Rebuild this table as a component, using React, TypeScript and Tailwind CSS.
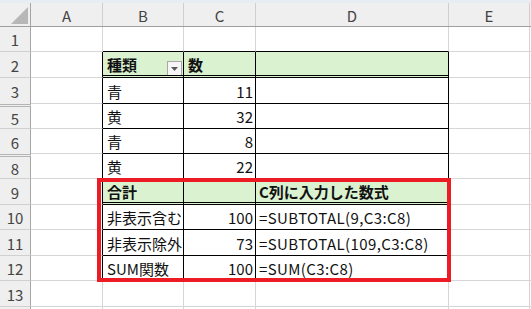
import type { ReactNode } from 'react';

type Row = {
  n: string;
  h: number;
  head?: boolean;
  filter?: boolean;
  afterHidden?: boolean;
  beforeHidden?: boolean;
  b?: string;
  c?: string;
  d?: string;
};

const columns = [
  { key: 'A', w: 72 },
  { key: 'B', w: 81 },
  { key: 'C', w: 72 },
  { key: 'D', w: 193 },
  { key: 'E', w: 81 },
];

const rows: Row[] = [
  { n: '1', h: 25 },
  { n: '2', h: 26, head: true, filter: true, b: '種類', c: '数' },
  { n: '3', h: 26, b: '青', c: '11', beforeHidden: true },
  { n: '5', h: 25, b: '黄', c: '32', afterHidden: true },
  { n: '6', h: 25, b: '青', c: '8', beforeHidden: true },
  { n: '8', h: 25, b: '黄', c: '22', afterHidden: true },
  { n: '9', h: 26, head: true, b: '合計', d: 'C列に入力した数式' },
  { n: '10', h: 25, b: '非表示含む', c: '100', d: '=SUBTOTAL(9,C3:C8)' },
  { n: '11', h: 26, b: '非表示除外', c: '73', d: '=SUBTOTAL(109,C3:C8)' },
  { n: '12', h: 25, b: 'SUM関数', c: '100', d: '=SUM(C3:C8)' },
  { n: '13', h: 26 },
];

// rows that belong to the bordered table (2..12)
const inTable = (r: Row) => !['1', '13'].includes(r.n);

function FilterButton() {
  return (
    <span className="mb-[-2px] ml-auto flex h-[16px] w-[15px] shrink-0 items-center justify-center self-end border border-[#a9a9a9] bg-[#f6f6f6]">
      <svg width="7" height="4" viewBox="0 0 7 4">
        <polygon points="0,0 7,0 3.5,4" fill="#5a5a5a" />
      </svg>
    </span>
  );
}

function Cell({
  w,
  className,
  children,
}: {
  w: number;
  className: string;
  children?: ReactNode;
}) {
  return (
    <div className={`flex shrink-0 items-center overflow-hidden whitespace-nowrap ${className}`} style={{ width: w }}>
      {children}
    </div>
  );
}

function SheetRow({ r }: { r: Row }) {
  const table = inTable(r);
  const bottomBlack = table || r.n === '1';
  const dataBottom = r.head
    ? 'border-b-[3px] border-double border-b-black'
    : bottomBlack
      ? 'border-b border-b-black'
      : 'border-b border-b-[#d6d6d6]';
  const dataRight = table ? 'border-r border-r-black' : 'border-r border-r-[#d6d6d6]';
  const fill = r.head ? 'bg-[#daf2d0] font-bold' : 'bg-white';
  const headerEdge = r.afterHidden
    ? 'border-t-[3px] border-double border-t-[#b5b5b5] border-b border-b-[#d0d0d0]'
    : r.beforeHidden
      ? ''
      : 'border-b border-b-[#d0d0d0]';

  return (
    <div className="flex" style={{ height: r.h }}>
      <div
        className={`flex w-[31px] shrink-0 items-center justify-center border-r border-r-[#a6a6a6] bg-[#efefef] pt-px text-[#444] ${headerEdge}`}
      >
        {r.n}
      </div>
      <Cell
        w={72}
        className={`border-b border-b-[#d6d6d6] ${table ? 'border-r border-r-black' : 'border-r border-r-[#d6d6d6]'}`}
      />
      <Cell w={81} className={`pl-[4px] pr-px pt-px ${dataBottom} ${dataRight} ${fill}`}>
        {r.b}
        {r.filter && <FilterButton />}
      </Cell>
      <Cell w={72} className={`pl-[4px] pt-px ${r.head ? '' : 'justify-end pr-[2px]'} ${dataBottom} ${dataRight} ${fill}`}>
        {r.c}
      </Cell>
      <Cell
        w={193}
        className={`pl-[3px] pt-px ${r.head ? '' : 'tracking-[0.4px]'} ${dataBottom} ${dataRight} ${fill}`}
      >
        {r.d}
      </Cell>
      <Cell w={81} className="border-b border-r border-b-[#d6d6d6] border-r-[#d6d6d6]" />
      <Cell w={1} className="border-b border-b-[#d6d6d6]" />
    </div>
  );
}

export default function App() {
  return (
    <div className="relative h-[309px] w-[531px] overflow-hidden bg-white font-['Noto_Sans_CJK_JP',sans-serif] text-[15px] leading-none text-[#111]">
      <div className="h-[3px] bg-[#e7edf3]" />

      {/* column headers */}
      <div className="flex h-[24px] border-b border-b-[#9e9e9e] bg-[#efefef] text-[#444]">
        <div className="flex w-[31px] shrink-0 items-end justify-end border-r border-r-[#a6a6a6] pb-[2px] pr-[2px]">
          <svg width="17" height="17" viewBox="0 0 17 17">
            <polygon points="17,0 17,17 0,17" fill="#b7b7b7" />
          </svg>
        </div>
        {columns.map((col) => (
          <div
            key={col.key}
            className="flex shrink-0 items-center justify-center border-r border-r-[#cfcfcf] pt-px"
            style={{ width: col.w }}
          >
            {col.key}
          </div>
        ))}
        <div className="w-px shrink-0" />
      </div>

      {rows.map((r) => (
        <SheetRow key={r.n} r={r} />
      ))}

      <div className="flex h-[2px]">
        <div className="w-[31px] shrink-0 border-r border-r-[#a6a6a6] bg-[#efefef]" />
        {columns.map((col) => (
          <div key={col.key} className="shrink-0 border-r border-r-[#d6d6d6]" style={{ width: col.w }} />
        ))}
      </div>

      {/* highlight frame around the totals block */}
      <div className="pointer-events-none absolute left-[97px] top-[178px] h-[104px] w-[354px] border-4 border-[#ed1c24]" />
    </div>
  );
}
